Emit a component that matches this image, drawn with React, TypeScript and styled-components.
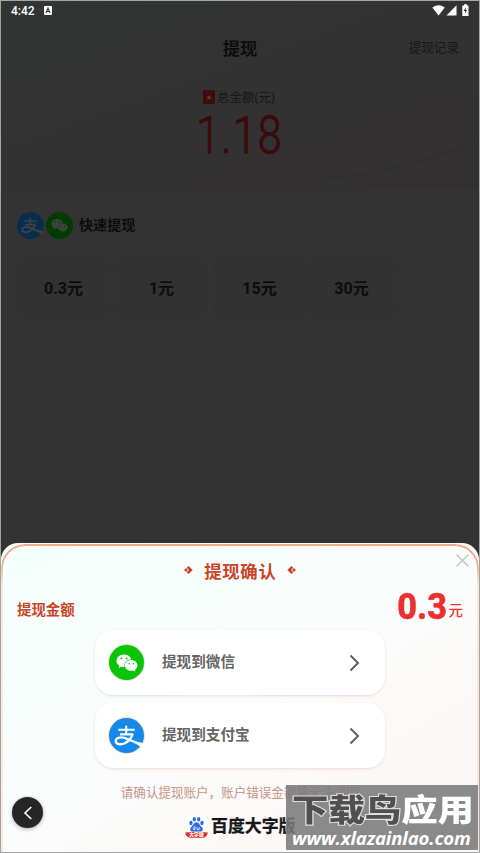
import React from "react";
import styled, { createGlobalStyle } from "styled-components";
import { FaWeixin } from "react-icons/fa";

const Global = createGlobalStyle`
  * { box-sizing: border-box; }
  body { margin: 0; background: #333; font-family: Roboto, "Noto Sans CJK SC", sans-serif; }
`;

const Screen = styled.div`
  position: relative;
  width: 480px;
  height: 853px;
  overflow: hidden;
  display: flex;
  flex-direction: column;
  border: 1px solid #a3a5a4;
  background: #333;
`;

const Backdrop = styled.main`
  height: 542px;
  flex: none;
  background: #333;
  color: #0c0c0c;
`;

const Hero = styled.section`
  position: relative;
  height: 188px;
  background: linear-gradient(160deg, #313534 0%, #333232 45%, #333130 100%);
  border-bottom: 1px solid #303030;
`;

const Swoosh = styled.svg`
  position: absolute;
  right: 0;
  bottom: 0;
`;

const StatusBar = styled.div`
  height: 19px;
  padding: 0 10px;
  display: flex;
  align-items: center;
  color: #fff;
  font-size: 12px;
  font-weight: 500;
  line-height: 18px;
`;

const StatusIcons = styled.div`
  display: flex;
  margin-left: auto;
  height: 13px;
`;

const InputBadge = styled.svg`
  margin-left: 9px;
`;

const Header = styled.header`
  display: grid;
  grid-template-columns: 1fr auto 1fr;
  align-items: center;
  height: 55px;
  padding-right: 20px;
`;

const PageTitle = styled.h1`
  grid-column: 2;
  margin: 0;
  padding-left: 20px;
  font-size: 17.2px;
  font-weight: 700;
`;

const RecordLink = styled.span`
  justify-self: end;
  margin-bottom: 2px;
  font-size: 12.6px;
  color: #171717;
`;

const TotalLabel = styled.div`
  display: flex;
  align-items: center;
  height: 20px;
  margin: 12px 0 0 202px;
  gap: 2px;
  font-size: 12.4px;
  color: #161616;
`;

const TotalValue = styled.div`
  width: 108px;
  height: 54px;
  margin: 1px 0 0 195px;
  line-height: 54px;
  font-size: 52.5px;
  font-weight: 300;
  letter-spacing: 1.1px;
  white-space: nowrap;
  color: #3b0b0b;
  -webkit-text-stroke: 1.1px #3b0b0b;
  transform: scaleX(0.83);
  transform-origin: left;
`;

const QuickRow = styled.div`
  display: flex;
  align-items: center;
  height: 28px;
  margin: 22px 0 0 16px;
  gap: 2px;
`;

const QuickTitle = styled.h2`
  margin: 0 0 2px 4px;
  font-size: 14.1px;
  font-weight: 700;
`;

const Amounts = styled.div`
  display: flex;
  gap: 6px;
  margin: 19px 0 0 16px;
`;

const AmountCard = styled.div<{ $pull?: number }>`
  display: flex;
  align-items: center;
  justify-content: center;
  width: 92px;
  height: 60px;
  padding: 0 0 2px 1px;
  margin-left: ${(p) => -(p.$pull ?? 0)}px;
  border-radius: 8px;
  border: 1px solid #313131;
  background: #323232;
  font-size: 16px;
  font-weight: 700;
`;

const Round = styled.span<{ $size: number; $color: string; $ring?: boolean }>`
  display: flex;
  flex: none;
  align-items: center;
  justify-content: center;
  width: ${(p) => p.$size}px;
  height: ${(p) => p.$size}px;
  border-radius: 50%;
  background: ${(p) => p.$color};
  box-shadow: ${(p) => (p.$ring ? "0 0 0 1px #f2dfcf" : "none")};
`;

const Sheet = styled.section`
  position: relative;
  flex: 1;
  padding: 13px 16px 0;
  border-radius: 17px 17px 0 0;
  background: linear-gradient(150deg, #f4fffc 0%, #fafdfc 48%, #fcf8f7 75%, #fcf7f5 100%);
`;

const SheetEdge = styled.div`
  position: absolute;
  inset: 1px 0 0;
  border: 2px solid #f6aa88;
  border-bottom: 0;
  border-radius: 24px 24px 0 0;
  mask-image: linear-gradient(#000 0, #000 18px, rgba(0,0,0,0.25) 40px);
  pointer-events: none;
`;

const SheetHead = styled.div`
  display: flex;
  align-items: center;
  justify-content: center;
  height: 28px;
  gap: 11px;
`;

const SheetTitle = styled.h2`
  margin: 0;
  font-size: 17.4px;
  font-weight: 700;
  letter-spacing: 0.7px;
  margin-right: -0.7px;
  color: #ce4324;
`;

const CloseButton = styled.svg`
  position: absolute;
  top: 11px;
  right: 10px;
`;

const SumRow = styled.div`
  display: flex;
  justify-content: space-between;
  align-items: center;
  height: 46px;
`;

const SumLabel = styled.span`
  margin-top: 3px;
  font-size: 14.4px;
  font-weight: 700;
  color: #c84528;
`;

const Sum = styled.span`
  display: flex;
  align-items: center;
  color: #eb302e;
`;

const SumValue = styled.b`
  width: 52px;
  font-size: 36px;
  line-height: 42px;
  font-weight: 800;
  -webkit-text-stroke: 0.5px #eb302e;
  transform: scaleX(0.95);
`;

const SumUnit = styled.span`
  margin: 4px 0 0 1px;
  font-size: 14.5px;
  font-weight: 500;
`;

const Options = styled.div`
  display: flex;
  flex-direction: column;
  gap: 8px;
  width: 290px;
  margin-left: 78px;
`;

const Option = styled.div`
  display: flex;
  align-items: center;
  height: 65px;
  padding: 0 25px 0 14px;
  border-radius: 18px;
  background: #fff;
  box-shadow: 0 1px 2.5px #efd9d5;
`;

const OptionName = styled.span`
  margin: 0 auto 4px 18px;
  font-size: 14.6px;
  font-weight: 700;
  color: #686462;
`;

const Notice = styled.p`
  margin: 15px 0 0;
  height: 20px;
  line-height: 20px;
  text-align: center;
  font-size: 12.55px;
  color: #c69488;
  white-space: nowrap;
`;

const Brand = styled.div`
  display: flex;
  align-items: center;
  height: 24px;
  gap: 3px;
  margin: 11px 0 0 168px;
`;

const BrandLogo = styled.span`
  position: relative;
  width: 23px;
  height: 23px;
`;

const BrandRibbonText = styled.span`
  position: absolute;
  left: 0;
  bottom: 0;
  width: 23px;
  line-height: 6px;
  font-size: 4.8px;
  font-weight: 900;
  text-align: center;
  color: #fff;
`;

const BrandName = styled.span`
  font-size: 16.9px;
  font-weight: 700;
  line-height: 24px;
  -webkit-text-stroke: 0.3px #171717;
  color: #171717;
`;

const BackButton = styled.div`
  position: absolute;
  left: 11px;
  top: 796px;
  display: grid;
  place-items: center;
  width: 31px;
  height: 31px;
  border-radius: 50%;
  background: #252525;
  box-shadow: 0 1px 4px rgba(0, 0, 0, 0.3);
`;

const Watermark = styled.div`
  position: absolute;
  left: 285px;
  top: 784px;
  width: 192px;
  height: 65px;
  padding: 1px 3px 0 5px;
  background: rgba(122, 122, 122, 0.87);
  border: 1px solid #8a8a8a;
`;

const WatermarkName = styled.div`
  height: 40px;
  line-height: 47px;
  font-size: 36.4px;
  font-weight: 900;
  white-space: nowrap;
  color: #fff;
  transform: scaleY(0.84);
  transform-origin: center 25px;
`;

const WatermarkDark = styled.span`
  color: #505050;
  -webkit-text-stroke: 2.6px #dedede;
  paint-order: stroke fill;
`;

const WatermarkUrl = styled.div`
  height: 22px;
  line-height: 21px;
  font-family: "Open Sans", sans-serif;
  font-size: 18.6px;
  font-weight: 700;
  font-style: italic;
  letter-spacing: -0.15px;
  white-space: nowrap;
  color: #fff;
`;

const AlipayGlyph = ({ size, color }: { size: number; color: string }) => (
  <svg width={size} height={size} viewBox="0 0 35 35" fill="none" stroke={color}>
    <path d="M9.3 11.7H25.7M17.2 7.8V16.5M11 16.4H23.8" strokeWidth="2.1" />
    <path
      d="M23.8 15.6C22.6 19.5 19.6 23.4 15.8 25.2C12 27 6.7 26.5 6.7 23C6.7 20 11 18.6 15.4 19.9C19.5 21.1 25.5 24.4 32.6 26.6"
      strokeWidth="2.3"
    />
    <path d="M21 22L33.6 25L31.6 28.8Z" fill={color} stroke="none" />
  </svg>
);

const TitleMark = ({ flip }: { flip?: boolean }) => (
  <svg width="9" height="10" viewBox="0 0 9 10" fill="none" stroke="#cf4024">
    <g transform={flip ? "translate(9 0) scale(-1 1)" : undefined}>
      <path d="M3.6 1.9L6.8 5L3.6 8.1" strokeWidth="2.6" />
      <path d="M2 3.1L3.8 5L2 6.9L0.2 5Z" fill="#cf4024" stroke="none" />
    </g>
  </svg>
);

const Chevron = () => (
  <svg width="11" height="18" viewBox="0 0 11 18" fill="none" stroke="#64605e" strokeWidth="2">
    <path d="M1.5 1.5L9 9L1.5 16.5" />
  </svg>
);

const amounts = [
  { label: "0.3元" },
  { label: "1元" },
  { label: "15元" },
  { label: "30元", pull: 6 },
];

export default function App() {
  return (
    <>
      <Global />
      <Screen>
        <Backdrop>
          <Hero>
            <Swoosh width="180" height="90" viewBox="0 0 180 90" fill="none">
              <path d="M20 82Q110 72 180 42" stroke="#313030" strokeWidth="4" />
            </Swoosh>
            <StatusBar>
              4:42
              <InputBadge width="8" height="9" viewBox="0 0 8 9">
                <rect width="8" height="9" rx="1" fill="#fff" />
                <path d="M2 7L4 2L6 7M2.8 5.5H5.2" fill="none" stroke="#333" strokeWidth="1.1" />
              </InputBadge>
              <StatusIcons>
                <svg width="38" height="13" viewBox="0 0 38 13" fill="#fff">
                  <path d="M1.3 3.5Q7.5-1 13.8 3.5L7.6 11.5Z" />
                  <path d="M15.5 11.5H25.5V1.2Z" />
                  <path d="M33 0.2H36V1.4H37.5V12H31.3V1.4H33Z" />
                  <path d="M34.6 3.3L32.8 7H34.2L33.8 10L36.1 6H34.8Z" fill="#333" />
                </svg>
              </StatusIcons>
            </StatusBar>
            <Header>
              <PageTitle>提现</PageTitle>
              <RecordLink>提现记录</RecordLink>
            </Header>
            <TotalLabel>
              <svg width="12" height="14" viewBox="0 0 12 14">
                <rect width="12" height="14" rx="1" fill="#430a0a" />
                <path d="M0 5Q6 9.5 12 5" fill="none" stroke="#281111" />
                <circle cx="6" cy="7.4" r="2" fill="#4b3936" />
                <path d="M3 2H9" stroke="#352020" />
              </svg>
              总金额(元)
            </TotalLabel>
            <TotalValue>1.18</TotalValue>
          </Hero>
          <QuickRow>
            <Round $size={27} $color="#0b2d4c">
              <AlipayGlyph size={27} color="#3c4246" />
            </Round>
            <Round $size={27} $color="#033b03">
              <FaWeixin size={17} color="#3b443b" />
            </Round>
            <QuickTitle>快速提现</QuickTitle>
          </QuickRow>
          <Amounts>
            {amounts.map((a) => (
              <AmountCard key={a.label} $pull={a.pull}>
                {a.label}
              </AmountCard>
            ))}
          </Amounts>
        </Backdrop>
        <Sheet>
          <SheetEdge />
          <SheetHead>
            <TitleMark />
            <SheetTitle>提现确认</SheetTitle>
            <TitleMark flip />
          </SheetHead>
          <CloseButton width="13" height="13" viewBox="0 0 13 13" stroke="#cbc6c2" strokeWidth="1.6">
            <path d="M0.7 0.7L12.3 12.3M12.3 0.7L0.7 12.3" />
          </CloseButton>
          <SumRow>
            <SumLabel>提现金额</SumLabel>
            <Sum>
              <SumValue>0.3</SumValue>
              <SumUnit>元</SumUnit>
            </Sum>
          </SumRow>
          <Options>
            <Option>
              <Round $size={35} $color="#09c507" $ring>
                <FaWeixin size={22} color="#fff" />
              </Round>
              <OptionName>提现到微信</OptionName>
              <Chevron />
            </Option>
            <Option>
              <Round $size={35} $color="#1688e9" $ring>
                <AlipayGlyph size={35} color="#fff" />
              </Round>
              <OptionName>提现到支付宝</OptionName>
              <Chevron />
            </Option>
          </Options>
          <Notice>请确认提现账户，账户错误金额将无法退回</Notice>
          <Brand>
            <BrandLogo>
              <svg width="23" height="23" viewBox="0 0 23 23">
                <rect x="0.3" y="0.3" width="22.4" height="22.4" rx="5" fill="#fff" stroke="#f2f2f2" strokeWidth="0.5" />
                <g fill="#2d6ce5">
                  <ellipse cx="6" cy="8" rx="1.7" ry="2.2" />
                  <ellipse cx="9.3" cy="4.2" rx="1.6" ry="2.2" />
                  <ellipse cx="13.7" cy="4.2" rx="1.6" ry="2.2" />
                  <ellipse cx="17" cy="8" rx="1.7" ry="2.2" />
                  <path d="M11.5 7.3C14.5 7.3 14.5 10.2 16.6 12C19 14.1 17.5 17 14.8 16.6C12.6 16.3 10.4 16.3 8.2 16.6C5.5 17 4 14.1 6.4 12C8.5 10.2 8.5 7.3 11.5 7.3Z" />
                </g>
                <path d="M9.8 11V14.6H8.6Q7.6 13.6 8.8 12.6H9.8M12 12.2V14.6H14.2V12.2" fill="none" stroke="#fff" strokeWidth="0.8" />
                <path d="M0.2 17.5Q11.5 16.2 22.8 17.5Q22 22.6 17.5 22.8H5.5Q1 22.6 0.2 17.5Z" fill="#e02f2f" />
              </svg>
              <BrandRibbonText>大字版</BrandRibbonText>
            </BrandLogo>
            <BrandName>百度大字版</BrandName>
          </Brand>
        </Sheet>
        <BackButton>
          <svg width="10" height="14" viewBox="0 0 10 14" fill="none" stroke="#fff" strokeWidth="1.6">
            <path d="M8.3 1L2 7L8.3 13" />
          </svg>
        </BackButton>
        <Watermark>
          <WatermarkName>
            <WatermarkDark>下载鸟</WatermarkDark>应用
          </WatermarkName>
          <WatermarkUrl>www.xlazainlao.com</WatermarkUrl>
        </Watermark>
      </Screen>
    </>
  );
}
